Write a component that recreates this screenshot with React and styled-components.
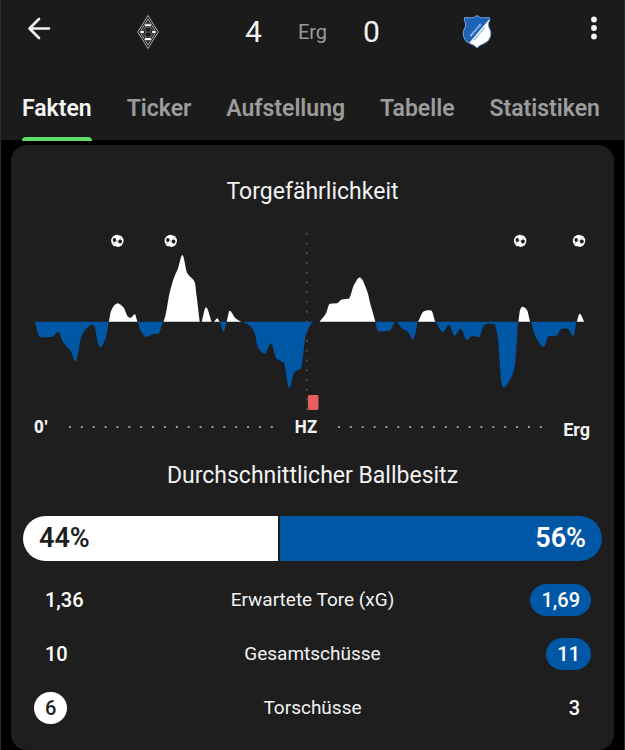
import React from 'react'
import styled, { createGlobalStyle } from 'styled-components'

const GlobalStyle = createGlobalStyle`
  * {
    box-sizing: border-box;
  }
  body {
    margin: 0;
    background: #000;
    color: #f2f2f2;
    font-family: Roboto, 'Liberation Sans', sans-serif;
  }
`
const Page = styled.div`
  border: solid #2b2b2b;
  border-width: 0 1px;
`
const Header = styled.header`
  background: #1b1b1b;
`
const TopBar = styled.div`
  display: grid;
  grid-template-columns: 48px 1fr 48px;
  align-items: center;
  height: 64px;
  padding: 0 6px 0 14px;
`
const IconButton = styled.button`
  display: flex;
  align-items: center;
  justify-content: center;
  width: 48px;
  height: 48px;
  margin: 0 0 8px;
  padding: 0;
  border: 0;
  background: none;
  color: #f2f2f2;
`
const Scoreline = styled.div`
  display: flex;
  align-items: center;
  justify-content: center;
  gap: 36px;
  padding-right: 8px;
`
const Crest = styled.svg`
  width: 32px;
  height: 36px;
  margin: 0 45px;
`
const Goals = styled.span`
  font-size: 30px;
  line-height: 36px;
`
const Status = styled.span`
  font-size: 20px;
  line-height: 24px;
  color: #9a9a9a;
`
const Tabs = styled.nav`
  display: flex;
  justify-content: space-between;
  height: 76px;
  padding: 0 24px 0 21px;
`
const Tab = styled.a`
  position: relative;
  padding-top: 31px;
  font-size: 23px;
  line-height: 28px;
  font-weight: 600;
  text-decoration: none;
  color: ${props => (props.$active ? '#f5f5f5' : '#9c9c9c')};

  &::after {
    content: '';
    display: ${props => (props.$active ? 'block' : 'none')};
    position: absolute;
    left: 0;
    right: 0;
    bottom: -1px;
    height: 4px;
    border-radius: 4px 4px 0 0;
    background: #5fdd69;
  }
`
const Card = styled.main`
  margin: 5px 10px 0;
  padding: 33px 12px 15px;
  border-radius: 16px;
  background: #1e1e1e;
`
const Heading = styled.h2`
  margin: 0;
  font-size: 23px;
  line-height: 28px;
  font-weight: 400;
  text-align: center;
`
const Chart = styled.svg`
  display: block;
  width: 100%;
  margin-top: 22px;
`
const Axis = styled.div`
  display: flex;
  align-items: center;
  height: 30px;
  margin-bottom: 20px;
  padding: 0 12px 0 11px;
`
const AxisLabel = styled.span`
  font-size: 17px;
  line-height: 24px;
  font-weight: 700;
  font-family: 'Open Sans', 'Noto Sans', sans-serif;
`
const EndLabel = styled(AxisLabel)`
  padding-top: 6px;
  font-family: Roboto, sans-serif;
  font-size: 18px;
`
const Dots = styled.span`
  flex: 1;
  height: 4px;
  margin: 0 16px;
  background: radial-gradient(circle, #9a9a9a 1px, transparent 1px);
  background-size: 12px 4px;
  background-repeat: round;
`
const Possession = styled.div`
  display: flex;
  gap: 2px;
  height: 45px;
  margin-top: 26px;
  border-radius: 23px;
  overflow: hidden;
  font-size: 27px;
  font-weight: 600;
  line-height: 45px;
`
const Share = styled.span`
  padding: 0 16px;
  text-align: ${props => (props.$home ? 'left' : 'right')};
  background: ${props => (props.$home ? '#fff' : '#0057a6')};
  color: ${props => (props.$home ? '#1e1e1e' : '#fff')};
`
const StatTable = styled.table`
  width: 100%;
  margin-top: 12px;
  border-collapse: collapse;
  table-layout: fixed;
`
const StatRow = styled.tr`
  height: 54px;
`
const StatName = styled.th`
  width: 50%;
  padding: 0;
  font-size: 19px;
  font-weight: 400;
`
const StatCell = styled.td`
  padding: 0 11px;
  text-align: ${props => props.$align};
`
const Value = styled.span`
  display: inline-block;
  padding: 0 11px;
  border-radius: 16px;
  font-size: 20px;
  line-height: 32px;
  font-weight: 500;
  background: ${props => props.$fill || 'transparent'};
  color: ${props => (props.$fill === '#fff' ? '#1e1e1e' : '#fff')};
`

const BASE = 94

// [x, y] outline points, every run starts and ends on the base line
const homeRuns = [
  [[86, 94], [88, 83.7], [92, 77], [95, 75.3], [100.7, 79.7], [105.3, 89], [107.7, 90], [112, 86.3], [114.7, 94]],
  [[140.7, 94], [142.7, 87.7], [147, 64.3], [152.3, 47], [154.7, 42], [159.7, 27], [164.7, 45.3], [172, 54.3], [174, 68.7], [177, 94]],
  [[179, 94], [183.3, 79.3], [189, 94]],
  [[191.3, 94], [194.7, 90.3], [197, 94]],
  [[204, 94], [207, 83], [212.7, 90.3], [218.7, 94]],
  [[297, 94], [303.3, 86], [307.3, 76], [314.7, 75.3], [319.3, 71.7], [326.3, 71], [331.3, 57.7], [337.3, 49.7], [344.7, 63], [348.7, 78.7], [353, 94]],
  [[395.7, 94], [401.3, 83.7], [405, 82.4], [409, 82.7], [413, 94]],
  [[496.3, 94], [498, 82], [500.3, 79], [504.7, 82], [508, 94]],
  [[554.7, 94], [557.7, 86], [562.3, 94]],
]
const awayRuns = [
  [[12, 94], [16, 108], [18, 109.7], [29, 109.3], [35.3, 104.3], [39.7, 113.7], [48, 123.7], [52.7, 133.7], [55.3, 125.3], [58, 109.7], [63, 101.3], [69.7, 96.7], [72, 99.7], [74.7, 113.7], [77, 119.7], [83, 110.3], [85.7, 94]],
  [[115, 94], [117.7, 103], [123, 109], [124.7, 109], [130, 106.3], [135.7, 106], [140, 94]],
  [[197.3, 94], [201, 104.3], [203.7, 94]],
  [[220, 94], [228, 98.7], [232, 105.3], [235.7, 120.3], [242.3, 126], [248.3, 115.7], [254, 131], [261.3, 135.3], [266.7, 160.7], [271.7, 144.7], [278.7, 140.3], [283.3, 107], [290, 94]],
  [[353, 94], [355, 102.3], [356.7, 103.7], [367.3, 103], [372.3, 94]],
  [[374.7, 94], [379.3, 100.3], [386.3, 104.7], [390.7, 112], [392.7, 107], [395.3, 94]],
  [[413.3, 94], [420.7, 104.3], [426.7, 97], [432.3, 108], [438.3, 101], [444.7, 112.3], [450, 108.3], [456.7, 109.3], [462, 97.3], [466.3, 95.7], [472.3, 96.3], [475.3, 107], [479.7, 157], [481.3, 159.7], [488, 151.7], [492.3, 140.3], [496, 94]],
  [[508.7, 94], [514.7, 111.3], [521.7, 119.3], [526.7, 108.3], [534, 108], [540, 100.7], [545.3, 100.7], [551.3, 108.3], [554.3, 94]],
]
const goals = [94.5, 148, 498, 557]

// monotone cubic through the points, so peaks never overshoot
const areaPath = points => {
  const slope = i =>
    (points[i + 1][1] - points[i][1]) / (points[i + 1][0] - points[i][0])
  const tangents = points.map((p, i) => {
    if (i === 0) return slope(0)
    if (i === points.length - 1) return slope(i - 1)
    const a = slope(i - 1)
    const b = slope(i)
    return a * b <= 0 ? 0 : (2 * a * b) / (a + b)
  })
  let d = `M${points[0][0]} ${BASE}`
  for (let i = 1; i < points.length; i++) {
    const [x0, y0] = points[i - 1]
    const [x1, y1] = points[i]
    const h = (x1 - x0) / 3
    d += `C${x0 + h} ${y0 + tangents[i - 1] * h} ${x1 - h} ${y1 - tangents[i] * h} ${x1} ${y1}`
  }
  return `${d}Z`
}

const Ball = ({ x }) => (
  <g transform={`translate(${x} 12.9)`}>
    <circle r="6.2" fill="#fff" />
    <ellipse cx="-2.9" cy="-0.8" rx="1.7" ry="2" fill="#1e1e1e" />
    <ellipse cx="2.8" cy="0.7" rx="1.9" ry="2" fill="#1e1e1e" />
    <path
      d="M.4-6.4L1.4-5.4 3-5.8ZM-2.6 5.9L-1.6 5-.2 6.3Z"
      fill="#1e1e1e"
    />
    <path d="M-1.6-.5L.9.3M-3.4 1L-4 3.6M2.9-1.2L3.4-3.6" stroke="#888" strokeWidth=".6" />
  </g>
)

const DangerChart = () => (
  <Chart viewBox="0 0 580 184" role="img" aria-label="Torgefährlichkeit">
    <line
      x1="284.3"
      y1="5.7"
      x2="284.3"
      y2="182"
      stroke="#464646"
      strokeWidth="2.4"
      strokeLinecap="round"
      strokeDasharray="0 9.77"
    />
    {homeRuns.map(run => (
      <path key={run[0][0]} d={areaPath(run)} fill="#fff" />
    ))}
    {awayRuns.map(run => (
      <path key={run[0][0]} d={areaPath(run)} fill="#0057a6" />
    ))}
    {goals.map(x => (
      <Ball key={x} x={x} />
    ))}
    <rect x="285.4" y="167.3" width="10.6" height="15" rx="1.5" fill="#e85f5f" />
  </Chart>
)

const HomeCrest = () => (
  <Crest viewBox="0 0 32 36" role="img" aria-label="Heim">
    <g fill="none" stroke="#d0d0d0" strokeWidth=".8">
      <path d="M16 1.5L26.3 18 16 34.5 5.7 18Z" />
      <path d="M16 5L24 18 16 31 8 18Z" />
      <path d="M16 8.5L22 18 16 27.5 10 18Z" stroke="#777" />
    </g>
    <path d="M13.2 10.2h5.6v2h-5.6ZM13.2 24h5.6v2h-5.6ZM9 17h2.8v2H9ZM20.2 17H23v2h-2.8Z" fill="#fff" />
    <path
      d="M13.4 13.5h3.8q1.9 0 1.9 2.1t-1.6 2.3q2 .2 2 2.5t-2.1 2.4h-4ZM13.4 18h4"
      fill="#1b1b1b"
      stroke="#666"
      strokeWidth=".9"
    />
  </Crest>
)

const shield =
  'M16 1.6Q12.5 4.8 8.5 3.8L3.6 3.7Q2.5 6.5 4.5 8.8Q5.3 12 3.3 15Q1.5 18.5 2.6 22.5Q4 27.5 9 29.5Q13 30.7 16 33.8Q19 30.7 23 29.5Q28 27.5 29.4 22.5Q30.5 18.5 28.7 15Q26.7 12 27.5 8.8Q29.5 6.5 28.4 3.7L23.5 3.8Q19.5 4.8 16 1.6Z'

const AwayCrest = () => (
  <Crest viewBox="0 0 32 36" role="img" aria-label="Gast">
    <clipPath id="shield">
      <path d={shield} />
    </clipPath>
    <g clipPath="url(#shield)">
      <path d="M0 0h32v36H0Z" fill="#fff" />
      <path d="M0 0h32v1L6 31.500 0 36Z" fill="#1c63b7" />
      <g fill="none" strokeDasharray="2 .6">
        <path d="M9.500 22L20 10" stroke="#a3c4ea" strokeWidth="2" />
        <path d="M13 26L24 13.500" stroke="#7fabdc" strokeWidth="1.400" />
      </g>
    </g>
    <path d={shield} fill="none" stroke="#6fa3dc" strokeWidth=".9" />
  </Crest>
)

const tabs = ['Fakten', 'Ticker', 'Aufstellung', 'Tabelle', 'Statistiken']

const stats = [
  { name: 'Erwartete Tore (xG)', home: '1,36', away: '1,69', leader: 'away' },
  { name: 'Gesamtschüsse', home: '10', away: '11', leader: 'away' },
  { name: 'Torschüsse', home: '6', away: '3', leader: 'home' },
]

const App = () => (
  <Page>
    <GlobalStyle />
    <Header>
      <TopBar>
        <IconButton aria-label="Zurück">
          <svg
            width="24"
            height="24"
            viewBox="0 0 24 24"
            fill="none"
            stroke="currentColor"
            strokeWidth="2.7"
            strokeLinecap="round"
            strokeLinejoin="round"
          >
            <path d="M22 12.5H2.5M12 3L2.5 12.5 12 22" />
          </svg>
        </IconButton>
        <Scoreline>
          <HomeCrest />
          <Goals>4</Goals>
          <Status>Erg</Status>
          <Goals>0</Goals>
          <AwayCrest />
        </Scoreline>
        <IconButton aria-label="Menü">
          <svg width="8" height="24" viewBox="0 0 8 24" fill="currentColor">
            <circle cx="4" cy="3.5" r="2.9" />
            <circle cx="4" cy="12" r="2.9" />
            <circle cx="4" cy="20.5" r="2.9" />
          </svg>
        </IconButton>
      </TopBar>
      <Tabs>
        {tabs.map((tab, i) => (
          <Tab key={tab} href={`#${tab}`} $active={i === 0}>
            {tab}
          </Tab>
        ))}
      </Tabs>
    </Header>
    <Card>
      <Heading>Torgefährlichkeit</Heading>
      <DangerChart />
      <Axis>
        <AxisLabel>0'</AxisLabel>
        <Dots />
        <AxisLabel>HZ</AxisLabel>
        <Dots />
        <EndLabel>Erg</EndLabel>
      </Axis>
      <Heading>Durchschnittlicher Ballbesitz</Heading>
      <Possession>
        <Share $home style={{ width: '44.2%' }}>
          44%
        </Share>
        <Share style={{ width: '55.8%' }}>56%</Share>
      </Possession>
      <StatTable>
        <tbody>
          {stats.map(({ name, home, away, leader }) => (
            <StatRow key={name}>
              <StatCell $align="left">
                <Value $fill={leader === 'home' && '#fff'}>{home}</Value>
              </StatCell>
              <StatName scope="row">{name}</StatName>
              <StatCell $align="right">
                <Value $fill={leader === 'away' && '#0057a6'}>{away}</Value>
              </StatCell>
            </StatRow>
          ))}
        </tbody>
      </StatTable>
    </Card>
  </Page>
)

export default App
